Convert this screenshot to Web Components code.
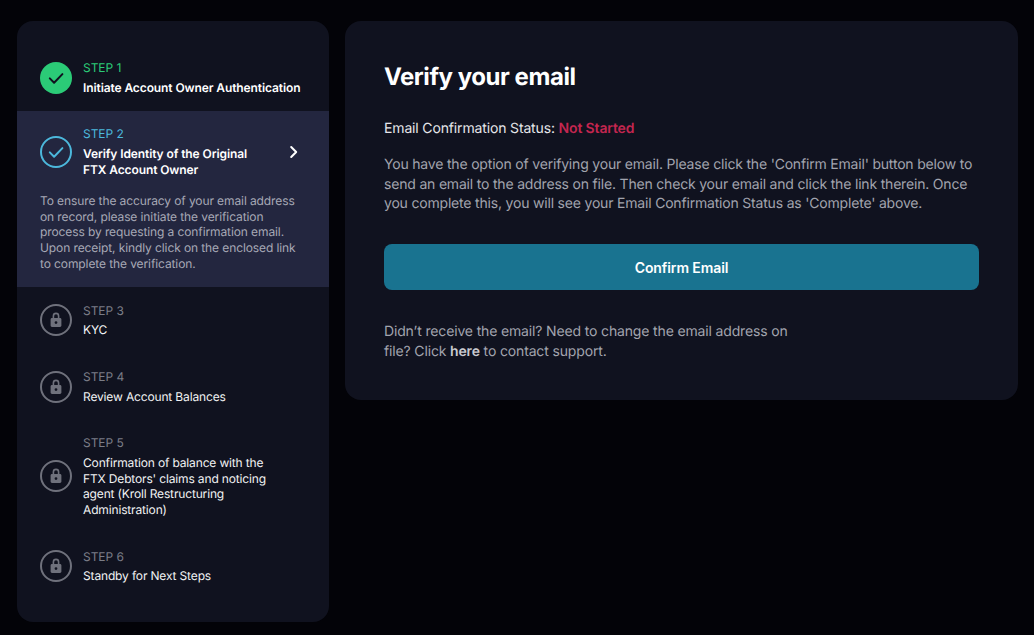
<!DOCTYPE html>
<html><head><meta charset="utf-8"><title>Verify your email</title>
<style>
html,body{margin:0;height:100%;background:#030308;font-family:Inter,"Liberation Sans",sans-serif;text-rendering:geometricPrecision;}
</style></head><body>
<app-shell>
  <step-list slot="side">
    <step-item state="done" label="STEP 1" title-text="Initiate Account Owner Authentication"></step-item>
    <step-item state="active" label="STEP 2" title-text="Verify Identity of the Original FTX Account Owner">To ensure the accuracy of your email address on record, please initiate the verification process by requesting a confirmation email. Upon receipt, kindly click on the enclosed link to complete the verification.</step-item>
    <step-item state="locked" label="STEP 3" title-text="KYC"></step-item>
    <step-item state="locked" label="STEP 4" title-text="Review Account Balances"></step-item>
    <step-item state="locked" label="STEP 5" title-text="Confirmation of balance with the FTX Debtors' claims and noticing agent (Kroll Restructuring Administration)"></step-item>
    <step-item state="locked" label="STEP 6" title-text="Standby for Next Steps"></step-item>
  </step-list>
  <verify-card slot="main"></verify-card>
</app-shell>
<script>
function def(name, html, init){
  customElements.define(name, class extends HTMLElement{
    connectedCallback(){
      if(this.shadowRoot) return;
      const r=this.attachShadow({mode:'open'});
      r.innerHTML=html;
      if(init) init(this,r);
    }
  });
}
def('app-shell',`<style>
:host{display:grid;grid-template-columns:312px 673px;column-gap:16px;align-items:start;padding:21px 16px 13px 17px;box-sizing:border-box;height:635px;overflow:hidden}
</style><slot name="side"></slot><slot name="main"></slot>`);
def('step-list',`<style>
:host{display:block;background:#10121f;border-radius:16px;padding:23.5px 0 15px;height:601px;box-sizing:border-box}
</style><slot></slot>`);
const icons={
 done:`<svg width="32" height="32" viewBox="0 0 32 32"><circle cx="16" cy="16" r="16" fill="#2bcb77"/><path d="M9.8 16.4l4.3 4.3 8.3-8.6" fill="none" stroke="#10121f" stroke-width="2" stroke-linecap="round" stroke-linejoin="round"/></svg>`,
 active:`<svg width="32" height="32" viewBox="0 0 32 32"><circle cx="16" cy="16" r="15" fill="none" stroke="#4cb8dc" stroke-width="2"/><path d="M9.8 16.4l4.3 4.3 8.3-8.6" fill="none" stroke="#4cb8dc" stroke-width="2" stroke-linecap="round" stroke-linejoin="round"/></svg>`,
 locked:`<svg width="32" height="32" viewBox="0 0 32 32"><circle cx="16" cy="16" r="15" fill="none" stroke="#6f717c" stroke-width="2"/><path fill-rule="evenodd" fill="#6f717c" d="M12.6 14v-2a3.4 3.4 0 0 1 6.8 0v2h.6c.8 0 1.4.6 1.4 1.4v6.2c0 .8-.6 1.4-1.4 1.4h-8c-.8 0-1.4-.6-1.4-1.4v-6.2c0-.8.6-1.4 1.4-1.4zm1.6 0h3.6v-2a1.8 1.8 0 0 0-3.6 0zM16 17.2a1.4 1.4 0 1 0 0 2.8 1.4 1.4 0 0 0 0-2.8z"/></svg>`
};
const colors={done:'#2bcb77',active:'#4cb8dc',locked:'#7b7d87'};
def('step-item',`<style>
:host{display:block;padding:15.6px 23px 15.6px;color:#fff}
:host([state=active]){background:#23263f;padding-bottom:15.8px}
.head{display:flex;align-items:center;gap:11px}
.ic{flex:none;width:32px;height:32px;display:block}
.ic svg{display:block}
.txt{flex:1;min-width:0;max-width:190px}
.label{font-size:12px;line-height:15.6px;letter-spacing:-.05px;margin-bottom:4px}
.title{font-size:12px;line-height:15.6px;letter-spacing:-.15px;font-weight:400;color:#f2f2f4}
:host([state=done]) .title,:host([state=active]) .title{font-weight:600;color:#fff;letter-spacing:-.1px}
:host([state=done]) .txt{max-width:none;white-space:nowrap}
.chev{flex:none;margin-left:auto;margin-right:7px;display:none}
:host([state=active]) .chev{display:block}
.desc{display:none;margin-top:16px;font-size:12px;line-height:15.6px;letter-spacing:-.1px;color:#a7a9b6}
:host([state=active]) .desc{display:block}
</style>
<div class="head"><span class="ic"></span><div class="txt"><div class="label"></div><div class="title"></div></div>
<svg class="chev" width="10" height="14" viewBox="0 0 10 14"><path d="M2.2 2l5 5-5 5" fill="none" stroke="#fff" stroke-width="2" stroke-linecap="round" stroke-linejoin="round"/></svg></div>
<div class="desc"><slot></slot></div>`,(h,r)=>{
  const s=h.getAttribute('state');
  r.querySelector('.ic').innerHTML=icons[s];
  const l=r.querySelector('.label');l.textContent=h.getAttribute('label');l.style.color=colors[s];
  r.querySelector('.title').textContent=h.getAttribute('title-text');
});
def('verify-card',`<style>
:host{display:block;background:#10121f;border-radius:16px;padding:39px 39px 38px;height:379px;box-sizing:border-box;color:#a2a4ae}
h1{margin:0;font-size:24px;line-height:34px;font-weight:700;color:#fff;letter-spacing:-.45px}
.status{margin:25px 0 0;font-size:14px;line-height:20px;letter-spacing:-.15px;color:#e6e6ea}
.status b{color:#c4264f;font-weight:600}
.para{margin:16px 0 0;font-size:14px;line-height:19.6px;letter-spacing:-.19px}
button{display:block;width:100%;height:46.5px;margin-top:30px;border:0;border-radius:8px;background:#197390;color:#fff;font:600 14px Inter,"Liberation Sans",sans-serif;letter-spacing:-.1px;padding:0}
.foot{margin:32px 0 0;font-size:14px;line-height:19.6px;letter-spacing:-.15px;max-width:420px}
.foot b{font-weight:600;color:#c9cad0}
</style>
<h1>Verify your email</h1>
<p class="status">Email Confirmation Status: <b>Not Started</b></p>
<p class="para">You have the option of verifying your email. Please click the 'Confirm Email' button below to send an email to the address on file. Then check your email and click the link therein. Once you complete this, you will see your Email Confirmation Status as 'Complete' above.</p>
<button>Confirm Email</button>
<p class="foot">Didn’t receive the email? Need to change the email address on file? Click <b>here</b> to contact support.</p>`);
</script>
</body></html>
